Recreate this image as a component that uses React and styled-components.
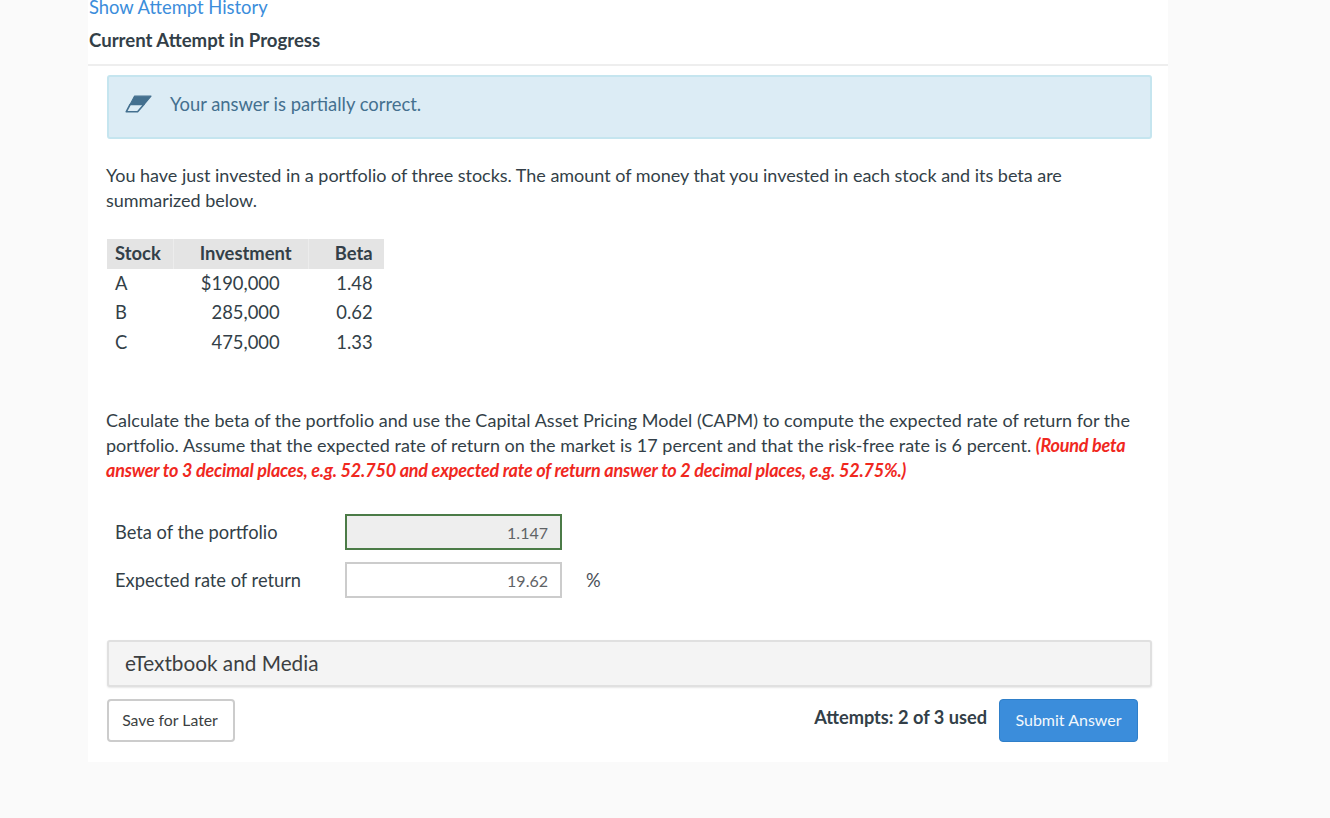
import React from 'react'
import styled, { createGlobalStyle } from 'styled-components'

const GlobalStyle = createGlobalStyle`
  html, body {
    margin: 0;
    height: 100%;
    overflow: hidden;
    background: #fafafa;
    font-family: Lato, "Liberation Sans", sans-serif;
    color: #333f48;
  }
`

const Sheet = styled.main`
  width: 1080px;
  height: 762px;
  margin-left: 88px;
  background: #fff;
  overflow: hidden;
`

const HistoryLink = styled.a`
  display: block;
  margin: -3px 0 0 1px;
  font-size: 18.4px;
  line-height: 20px;
  color: #3b8ddb;
`

const AttemptTitle = styled.h2`
  margin: 13px 0 0 1px;
  font-size: 18.6px;
  line-height: 20px;
  font-weight: 700;
  color: #333f48;
`

const Divider = styled.hr`
  margin: 14px 0 0;
  border: 0;
  height: 2px;
  background: #eeeeee;
`

const Alert = styled.div`
  display: flex;
  align-items: center;
  gap: 18px;
  box-sizing: border-box;
  height: 64px;
  margin: 9px 16px 0 19px;
  padding: 0 16px 6px;
  background: #dcecf5;
  border: 2px solid #c5e5ef;
  border-radius: 3px;
  font-size: 18.4px;
  color: #44708f;
`

const Prose = styled.p`
  margin: ${p => p.$top}px 30px 0 18px;
  font-size: 18px;
  line-height: 25px;
  letter-spacing: ${p => p.$spacing}px;
  color: #333f48;
`

const Warning = styled.strong`
  font-style: italic;
  font-weight: 700;
  color: #f0281e;
  letter-spacing: -0.2px;
`

const StockTable = styled.table`
  margin: 26px 0 0 19px;
  border-collapse: separate;
  border-spacing: 0;
  font-size: 18.4px;
`

const HeadCell = styled.th`
  box-sizing: border-box;
  height: 30px;
  padding: 0 ${p => p.$right}px 2px ${p => p.$left}px;
  background: #e4e4e4;
  border-right: ${p => (p.$last ? 0 : '1px solid #ececec')};
  font-weight: 700;
  text-align: ${p => p.$align};
  color: #333f48;
`

const BodyCell = styled.td`
  box-sizing: border-box;
  height: 29.6px;
  padding: 0 ${p => p.$right}px 2px ${p => p.$left}px;
  text-align: ${p => p.$align};
  color: #333f48;
`

const Fields = styled.div`
  display: grid;
  grid-template-columns: 230px 217px auto;
  grid-auto-rows: 36px;
  row-gap: 12px;
  align-items: center;
  margin: 31px 0 0 27px;
  font-size: 18.3px;
`

const FieldLabel = styled.label`
  color: #333f48;
`

const ValueBox = styled.div`
  box-sizing: border-box;
  height: 36px;
  padding-right: 12px;
  line-height: 33px;
  text-align: right;
  font-size: 16px;
  color: #5f6366;
  background: ${p => (p.$correct ? '#eeeeee' : '#fff')};
  border: 2px solid ${p => (p.$correct ? '#4b7b47' : '#cccccc')};
`

const Unit = styled.span`
  margin-left: 24px;
  color: #4a5058;
`

const MediaBar = styled.div`
  box-sizing: border-box;
  height: 47px;
  margin: 42px 16px 0 19px;
  padding-left: 16px;
  line-height: 43px;
  font-size: 20.75px;
  color: #3c3f42;
  background: #f4f4f4;
  border: 2px solid #e0e0e0;
  border-radius: 3px;
  box-shadow: 0 1px 2px rgba(0, 0, 0, 0.1);
`

const Actions = styled.div`
  display: flex;
  align-items: center;
  margin: 12px 30px 0 19px;
`

const SaveButton = styled.button`
  box-sizing: border-box;
  width: 128px;
  height: 43px;
  padding: 0 2px 2px 0;
  background: #fff;
  border: 2px solid #cccccc;
  border-radius: 4px;
  font: 400 15.8px Lato, "Liberation Sans", sans-serif;
  color: #3c3f42;
`

const AttemptCount = styled.span`
  margin: -6px 12px 0 auto;
  font-size: 18.2px;
  font-weight: 700;
  color: #333f48;
`

const SubmitButton = styled.button`
  box-sizing: border-box;
  width: 139px;
  height: 43px;
  padding: 0 0 2px;
  background: #3b8ddb;
  border: 1px solid #2f7fc9;
  border-radius: 4px;
  font: 400 16px Lato, "Liberation Sans", sans-serif;
  color: #f2f8fd;
`

const EraserIcon = () => (
  <svg width="27" height="18" viewBox="0 0 27 18" fill="none">
    <path d="M9.5 1.2H26L18.9 9.5H5.1Z" fill="#44708f" stroke="#44708f" strokeWidth="1.2" strokeLinejoin="round" />
    <path d="M5.1 9.5H18.9L12.6 16.8H1.2Z" fill="#dcecf5" stroke="#44708f" strokeWidth="1.6" strokeLinejoin="round" />
  </svg>
)

const stocks = [
  ['A', '$190,000', '1.48'],
  ['B', '285,000', '0.62'],
  ['C', '475,000', '1.33']
]

const App = () => (
  <>
    <GlobalStyle />
    <Sheet>
      <HistoryLink>Show Attempt History</HistoryLink>
      <AttemptTitle>Current Attempt in Progress</AttemptTitle>
      <Divider />
      <Alert>
        <EraserIcon />
        Your answer is partially correct.
      </Alert>
      <Prose $top={24} $spacing={-0.02}>
        You have just invested in a portfolio of three stocks. The amount of money that you invested in each stock and
        its beta are summarized below.
      </Prose>
      <StockTable>
        <thead>
          <tr>
            <HeadCell $align="left" $left={8} $right={12}>Stock</HeadCell>
            <HeadCell $align="left" $left={26} $right={16}>Investment</HeadCell>
            <HeadCell $align="right" $left={26} $right={11} $last>Beta</HeadCell>
          </tr>
        </thead>
        <tbody>
          {stocks.map(([name, amount, beta]) => (
            <tr key={name}>
              <BodyCell $align="left" $left={8} $right={12}>{name}</BodyCell>
              <BodyCell $align="right" $left={26} $right={29}>{amount}</BodyCell>
              <BodyCell $align="right" $left={26} $right={11}>{beta}</BodyCell>
            </tr>
          ))}
        </tbody>
      </StockTable>
      <Prose $top={50} $spacing={0.03}>
        Calculate the beta of the portfolio and use the Capital Asset Pricing Model (CAPM) to compute the expected rate
        of return for the portfolio. Assume that the expected rate of return on the market is 17 percent and that the
        risk-free rate is 6 percent.{' '}
        <Warning>
          (Round beta answer to 3 decimal places, e.g. 52.750 and expected rate of return answer to 2 decimal places,
          e.g. 52.75%.)
        </Warning>
      </Prose>
      <Fields>
        <FieldLabel>Beta of the portfolio</FieldLabel>
        <ValueBox $correct>1.147</ValueBox>
        <span />
        <FieldLabel>Expected rate of return</FieldLabel>
        <ValueBox>19.62</ValueBox>
        <Unit>%</Unit>
      </Fields>
      <MediaBar>eTextbook and Media</MediaBar>
      <Actions>
        <SaveButton>Save for Later</SaveButton>
        <AttemptCount>Attempts: 2 of 3 used</AttemptCount>
        <SubmitButton>Submit Answer</SubmitButton>
      </Actions>
    </Sheet>
  </>
)

export default App
